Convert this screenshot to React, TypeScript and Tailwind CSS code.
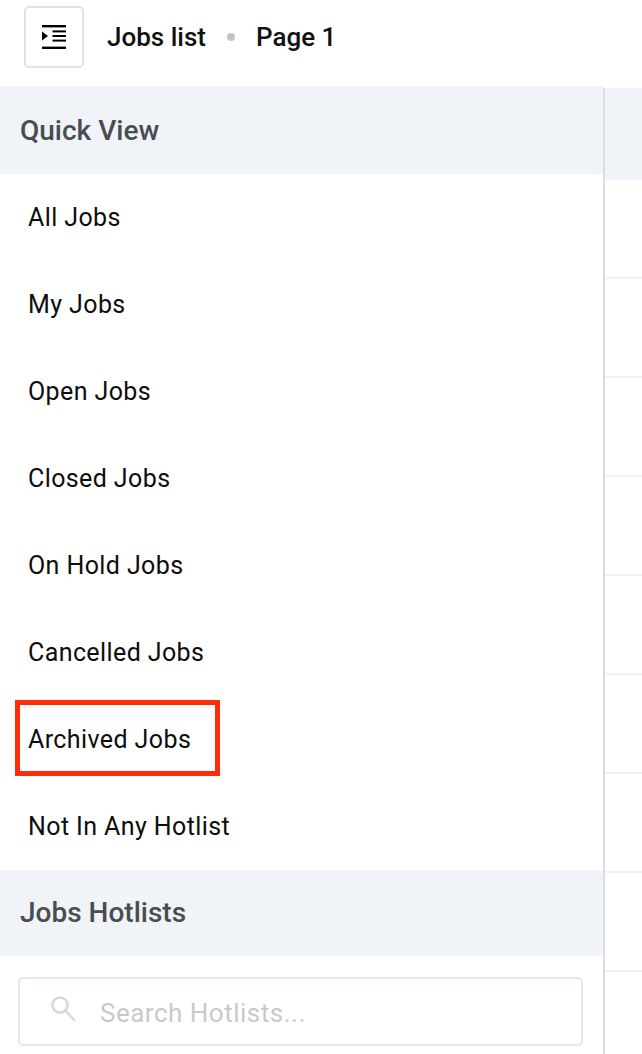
import React from "react";

const quickViews = [
  "All Jobs",
  "My Jobs",
  "Open Jobs",
  "Closed Jobs",
  "On Hold Jobs",
  "Cancelled Jobs",
  "Archived Jobs",
  "Not In Any Hotlist",
];

function IndentIcon() {
  return (
    <svg width="24" height="24" viewBox="0 0 24 24" className="text-black">
      <rect x="0" y="0" width="24" height="2.4" fill="currentColor" />
      <rect x="10.5" y="5.4" width="13.5" height="2" fill="currentColor" />
      <rect x="10.5" y="10" width="13.5" height="2" fill="currentColor" />
      <rect x="10.5" y="14.6" width="13.5" height="2" fill="currentColor" />
      <rect x="0" y="21.6" width="24" height="2.4" fill="currentColor" />
      <path d="M0 6.5 L6 11 L0 15.5 Z" fill="currentColor" />
    </svg>
  );
}

function SearchIcon() {
  return (
    <svg width="28" height="28" viewBox="0 0 28 28" fill="none" stroke="#d6d6d6" strokeWidth="2.4" className="mb-[6px]">
      <circle cx="11" cy="10" r="7.6" />
      <path d="M16.5 15.5 L25 25" strokeLinecap="round" />
    </svg>
  );
}

export default function App() {
  return (
    <div className="w-[642px] h-[1054px] overflow-hidden bg-white flex flex-col font-['Roboto',sans-serif]">
      <header className="h-[86px] shrink-0 flex items-start pl-6 pt-[6px]">
        <button className="w-[60px] h-[62px] rounded-[5px] border-2 border-[#e2e2e2] flex items-center justify-center">
          <IndentIcon />
        </button>
        <span className="ml-[23px] mt-[15px] text-[26px] leading-[32px] font-medium text-[#111]">Jobs list</span>
        <span className="ml-[21px] mt-[27px] w-[8px] h-[8px] rounded-full bg-[#c4c4c4]" />
        <span className="ml-[21px] mt-[15px] text-[26px] leading-[32px] font-medium text-[#111]">Page 1</span>
      </header>
      <div className="flex-1 flex min-h-0">
        <aside className="w-[603px] shrink-0">
          <div className="h-[88px] pt-[2px] bg-[#f0f4f8] flex items-center pl-[20px] text-[28px] font-medium text-[#4a4d50]">
            Quick View
          </div>
          <ul>
            {quickViews.map((name) => (
              <li key={name} className="h-[87px] flex items-center pl-[28px] text-[25px] tracking-[0.4px] text-[#0d0d0d]">
                <span className={name === "Archived Jobs" ? "relative" : ""}>
                  {name}
                  {name === "Archived Jobs" && (
                    <span className="absolute left-[-13px] top-[-21px] w-[205px] h-[76px] border-[5px] border-[#ff2d07]" />
                  )}
                </span>
              </li>
            ))}
          </ul>
          <div className="h-[86px] bg-[#f0f4f8] flex items-center pl-[20px] text-[28px] font-medium text-[#4a4d50]">
            Jobs Hotlists
          </div>
          <div className="pt-[21px] pl-[18px] pr-[20px]">
            <div className="h-[69px] rounded-[5px] border-2 border-[#e1e8ee] flex items-center pl-[29px]">
              <SearchIcon />
              <span className="ml-[23px] text-[26px] tracking-[0.5px] text-[#c9c9c9] mt-[3px]">Search Hotlists...</span>
            </div>
          </div>
        </aside>
        <div className="flex-1 mt-[2px] border-l-2 border-[#dcdcdc]">
          <div className="h-[92px] bg-[#f0f4f8]" />
          {[0, 1, 2, 3, 4, 5, 6, 7].map((i) => (
            <div key={i} className="h-[99px] border-b-2 border-[#f2f2f2]" />
          ))}
        </div>
      </div>
    </div>
  );
}
